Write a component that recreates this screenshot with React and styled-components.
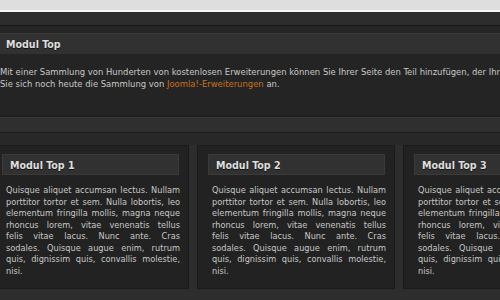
import React from "react";
import styled, { createGlobalStyle } from "styled-components";

const Global = createGlobalStyle`
  html, body { margin: 0; padding: 0; background: #2c2c2c; }
  body { width: 500px; height: 300px; overflow: hidden; font-family: "DejaVu Sans Condensed", "DejaVu Sans", sans-serif; }
`;

const Page = styled.div`
  width: 500px;
  height: 300px;
  overflow: hidden;
  display: flex;
  flex-direction: column;
`;

const Chrome = styled.div`
  height: 10px;
  background: #dedede;
  border-bottom: 2px solid #f4f4f4;
`;

const TopBar = styled.div`
  height: 13px;
  background: #2d2d2d;
  border-bottom: 1px solid #181818;
`;

const SubBar = styled.div`
  height: 7px;
  background: #262626;
  border-bottom: 1px solid #3a3a3a;
`;

const ModuleHead = styled.div`
  height: 20px;
  background: #313131;
  display: flex;
  align-items: center;
  padding-left: 6px;
  font-family: "DejaVu Sans Condensed", "DejaVu Sans", sans-serif;
  font-weight: bold;
  font-size: 10.6px;
  color: #dedede;
  text-shadow: 0 1px 0 #111;
`;

const ModuleBody = styled.div`
  height: 63px;
  background: #242424;
  padding-top: 12px;
  box-sizing: border-box;
  font-family: "DejaVu Sans Condensed", "DejaVu Sans", sans-serif;
  font-size: 9.4px;
  line-height: 11.5px;
  color: #c8c8c8;
  white-space: nowrap;
  overflow: hidden;
  border-bottom: 2px solid #1e1e1e;
`;

const Link = styled.a`
  color: #c6721e;
  text-decoration: none;
`;

const Band = styled.div`
  height: 14px;
  background: #2f2f2f;
  border-top: 1px solid #383838;
  border-bottom: 1px solid #1c1c1c;
`;

const Columns = styled.div`
  flex: 1;
  display: flex;
  gap: 8px;
  margin-left: -9px;
  padding-top: 12px;
  background: linear-gradient(#282828 12px, #2d2d2d 12px);
`;

const Box = styled.div`
  flex: 0 0 198px;
  height: 144px;
  box-sizing: border-box;
  background: #222222;
  border: 1px solid #1b1b1b;
  padding: 8px 8px 0 10px;
`;

const BoxTitle = styled.div`
  height: 21px;
  box-sizing: border-box;
  margin-right: 1px;
  background: #313131;
  border: 1px solid #3a3a3a;
  display: flex;
  align-items: center;
  padding-left: 7px;
  font-family: "DejaVu Sans Condensed", "DejaVu Sans", sans-serif;
  font-weight: bold;
  font-size: 10.6px;
  color: #dedede;
  text-shadow: 0 1px 0 #111;
`;

const BoxText = styled.p`
  margin: 10px 0 0;
  padding: 0 0 0 4px;
  font-family: "DejaVu Sans Condensed", "DejaVu Sans", sans-serif;
  font-size: 9.15px;
  word-spacing: 0.7px;
  line-height: 11.5px;
  color: #c8c8c8;
  text-align: justify;
`;

const lorem =
  "Quisque aliquet accumsan lectus. Nullam porttitor tortor et sem. Nulla lobortis, leo elementum fringilla mollis, magna neque rhoncus lorem, vitae venenatis tellus felis vitae lacus. Nunc ante. Cras sodales. Quisque augue enim, rutrum quis, dignissim quis, convallis molestie, nisi.";

export default function App() {
  return (
    <Page>
      <Global />
      <Chrome />
      <TopBar />
      <SubBar />
      <ModuleHead>Modul Top</ModuleHead>
      <ModuleBody>
        Mit einer Sammlung von Hunderten von kostenlosen Erweiterungen können Sie Ihrer Seite den Teil hinzufügen, der Ihnen noch fehlt. Schauen
        <br />
        Sie sich noch heute die Sammlung von <Link href="#">Joomla!-Erweiterungen</Link> an.
      </ModuleBody>
      <Band />
      <Columns>
        {[1, 2, 3].map((n) => (
          <Box key={n}>
            <BoxTitle>Modul Top {n}</BoxTitle>
            <BoxText>{lorem}</BoxText>
          </Box>
        ))}
      </Columns>
    </Page>
  );
}
